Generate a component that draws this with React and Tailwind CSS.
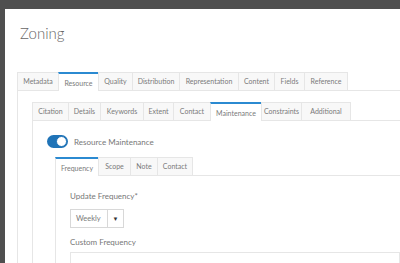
import { useState } from "react";

const mainTabs = [
  ["Metadata", "w-[41px]"],
  ["Resource", "w-[40px]"],
  ["Quality", "w-[34px]"],
  ["Distribution", "w-[47px]"],
  ["Representation", "w-[59px]"],
  ["Content", "w-[36px]"],
  ["Fields", "w-[30px]"],
  ["Reference", "w-[44px]"],
];

const resourceTabs = [
  ["Citation", "w-[36px]"],
  ["Details", "w-[32px]"],
  ["Keywords", "w-[43px]"],
  ["Extent", "w-[30px]"],
  ["Contact", "w-[37px]"],
  ["Maintenance", "w-[51px]"],
  ["Constraints", "w-[40px]"],
  ["Additional", "w-[50px]"],
];

const maintTabs = [
  ["Frequency", "w-[43px]"],
  ["Scope", "w-[32px]"],
  ["Note", "w-[27px]"],
  ["Contact", "w-[36px]"],
];

function TabBar({ tabs, active }) {
  return (
    <div className="flex h-[19px] border-b border-[#e6e6e6]">
      {tabs.map(([label, w], i) => (
        <div
          key={label}
          className={`${w} flex shrink-0 items-center justify-center border-l border-[#e6e6e6] text-[7px] ${
            i === tabs.length - 1 ? "border-r" : ""
          } ${
            label === active
              ? "-mb-px border-t-2 border-t-[#2b8ad1] bg-white pt-px"
              : "border-t bg-[#f8f8f8]"
          } text-[#7a7a7a]`}
        >
          {label}
        </div>
      ))}
    </div>
  );
}

export default function App() {
  const [enabled, setEnabled] = useState(true);

  return (
    <div
      className="h-[263px] w-[400px] overflow-hidden bg-[#4f4f4f] pl-[5px] pt-[9px]"
      style={{ fontFamily: "Lato, 'Open Sans', sans-serif" }}
    >
      <div className="h-full bg-white pl-[12px]">
        <div className="h-[63px] pl-[3px] pt-[13px] text-[15px] font-light text-[#666]">Zoning</div>

        <TabBar tabs={mainTabs} active="Resource" />

        <div className="h-full border-l border-[#e6e6e6] pl-[14px] pt-[11px]">
          <TabBar tabs={resourceTabs} active="Maintenance" />

          <div className="h-full border-l border-[#e6e6e6] pl-[14px] pt-[14px]">
            <div className="flex items-center gap-[6px]">
              <button
                onClick={() => setEnabled(!enabled)}
                className={`flex h-[13px] w-[21px] items-center rounded-full p-px ${
                  enabled ? "justify-end bg-[#1f73b7]" : "justify-start bg-[#ccc]"
                }`}
              >
                <span className="h-[11px] w-[11px] rounded-full border border-[#1f73b7] bg-white" />
              </button>
              <span className="text-[8px] text-[#777]">Resource Maintenance</span>
            </div>

            <div className="pl-[8px] pt-[9px]">
              <TabBar tabs={maintTabs} active="Frequency" />

              <div className="h-full border-l border-[#e6e6e6] pl-[14px] pt-[14px]">
                <div className="text-[8px] text-[#777]">Update Frequency*</div>
                <div className="mt-[7px] flex h-[19px] w-[54px] border border-[#d8d8d8] text-[7.5px] text-[#7a7a7a]">
                  <div className="flex flex-1 items-center pl-[5px]">Weekly</div>
                  <div className="flex w-[16px] items-center justify-center border-l border-[#d8d8d8] text-[6px] text-[#333]">
                    ▼
                  </div>
                </div>
                <div className="mt-[8px] text-[8px] text-[#777]">Custom Frequency</div>
                <div className="mt-[4px] h-[30px] border border-[#e6e6e6]" />
              </div>
            </div>
          </div>
        </div>
      </div>
    </div>
  );
}
